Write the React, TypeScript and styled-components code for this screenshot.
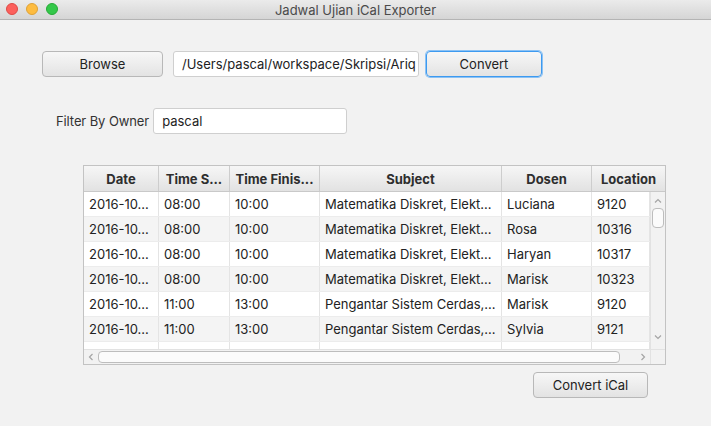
import React from "react";
import styled, { createGlobalStyle } from "styled-components";

const Global = createGlobalStyle`
  html, body { margin: 0; padding: 0; }
  body { font-family: Inter, "Noto Sans", sans-serif; background: #ececec; }
  * { box-sizing: border-box; }
`;

const Window = styled.div`
  width: 711px;
  height: 426px;
  background: #f2f2f2;
  display: flex;
  flex-direction: column;
  overflow: hidden;
`;

const TitleBar = styled.div`
  height: 20px;
  flex: none;
  position: relative;
  display: flex;
  align-items: center;
  justify-content: center;
  background: linear-gradient(#ebebeb, #d5d5d5);
  border-bottom: 1px solid #b4b4b4;
  font-size: 13px;
  color: #4a4a4a;
`;

const Lights = styled.div`
  position: absolute;
  left: 6px;
  top: 3px;
  display: flex;
  gap: 8px;
`;

const Light = styled.span<{ $c: string; $b: string }>`
  width: 12px;
  height: 12px;
  border-radius: 50%;
  background: ${(p) => p.$c};
  border: 0.5px solid ${(p) => p.$b};
`;

const Content = styled.div`
  flex: 1;
  display: flex;
  flex-direction: column;
`;

const TopRow = styled.div`
  display: flex;
  align-items: center;
  margin: 31px 0 0 42px;
`;

const Button = styled.button<{ $w: number; $focus?: boolean }>`
  width: ${(p) => p.$w}px;
  height: 26px;
  font-family: inherit;
  font-size: 13px;
  color: #222;
  background: linear-gradient(#f7f7f7, #e3e3e3);
  border: 1px solid ${(p) => (p.$focus ? "#3d9af0" : "#b8b8b8")};
  box-shadow: ${(p) => (p.$focus ? "0 0 0 1px #8cc2f4" : "none")};
  border-radius: 4px;
  padding: 0;
  margin: 0;
`;

const Field = styled.div<{ $w: number }>`
  width: ${(p) => p.$w}px;
  height: 26px;
  background: #fff;
  border: 1px solid #cfcfcf;
  border-radius: 3px;
  font-size: 13px;
  color: #222;
  display: flex;
  align-items: center;
  padding-left: 8px;
  white-space: nowrap;
  overflow: hidden;
`;

const FilterRow = styled.div`
  display: flex;
  align-items: center;
  margin: 31px 0 0 56px;
`;

const Label = styled.span`
  font-size: 13px;
  color: #333;
  margin-right: 4px;
  letter-spacing: -0.1px;
`;

const Table = styled.div`
  margin: 31px 0 0 83px;
  width: 583px;
  height: 200px;
  border: 1px solid #c3c3c3;
  background: #fff;
  display: flex;
  flex-direction: column;
  overflow: hidden;
`;

const cols = "75px 71px 90px 182px 90px 1fr";

const Header = styled.div`
  height: 26px;
  flex: none;
  display: grid;
  grid-template-columns: ${cols};
  background: linear-gradient(#f6f6f6, #e2e2e2);
  border-bottom: 1px solid #c9c9c9;
`;

const HeadCell = styled.div`
  font-size: 13px;
  font-weight: 700;
  color: #2e2e2e;
  display: flex;
  align-items: center;
  justify-content: center;
  border-right: 1px solid #cdcdcd;
  white-space: nowrap;
  overflow: hidden;
  &:last-child { border-right: none; }
`;

const BodyArea = styled.div`
  flex: 1;
  display: flex;
  overflow: hidden;
`;

const Rows = styled.div`
  flex: 1;
  overflow: hidden;
`;

const Row = styled.div<{ $alt: boolean }>`
  height: 25px;
  display: grid;
  grid-template-columns: ${cols};
  background: ${(p) => (p.$alt ? "#f4f4f4" : "#fff")};
  border-bottom: 1px solid #ececec;
`;

const Cell = styled.div`
  font-size: 13px;
  color: #222;
  display: flex;
  align-items: center;
  padding-left: 5px;
  border-right: 1px solid #e4e4e4;
  white-space: nowrap;
  overflow: hidden;
`;

const VScroll = styled.div`
  width: 15px;
  flex: none;
  background: #f2f2f2;
  border-left: 1px solid #e2e2e2;
  display: flex;
  flex-direction: column;
  align-items: center;
  padding-top: 4px;
  position: relative;
`;

const VThumb = styled.div`
  width: 12px;
  height: 20px;
  margin-top: 2px;
  background: #fbfbfb;
  border: 1px solid #bdbdbd;
  border-radius: 4px;
`;

const DownArrow = styled.div`
  position: absolute;
  bottom: 3px;
  left: 2px;
`;

const HBar = styled.div`
  height: 15px;
  flex: none;
  display: flex;
  align-items: center;
  background: #f2f2f2;
  border-top: 1px solid #e2e2e2;
  padding-left: 2px;
`;

const HThumb = styled.div`
  width: 522px;
  height: 12px;
  margin-left: 2px;
  background: #fbfbfb;
  border: 1px solid #bdbdbd;
  border-radius: 4px;
`;

const HRight = styled.div`
  margin-left: 18px;
  display: flex;
`;

const Corner = styled.div`
  margin-left: auto;
  width: 15px;
  height: 100%;
  border-left: 1px solid #e2e2e2;
`;

const Footer = styled.div`
  display: flex;
  margin: 7px 0 0 533px;
`;

const Chevron = ({ d }: { d: string }) => (
  <svg width="10" height="10" viewBox="0 0 10 10">
    <path d={d} fill="none" stroke="#a5a5a5" strokeWidth="1.2" />
  </svg>
);

const headers = ["Date", "Time S...", "Time Finis...", "Subject", "Dosen", "Location"];

const data = [
  ["2016-10...", "08:00", "10:00", "Matematika Diskret, Elekt...", "Luciana", "9120"],
  ["2016-10...", "08:00", "10:00", "Matematika Diskret, Elekt...", "Rosa", "10316"],
  ["2016-10...", "08:00", "10:00", "Matematika Diskret, Elekt...", "Haryan", "10317"],
  ["2016-10...", "08:00", "10:00", "Matematika Diskret, Elekt...", "Marisk", "10323"],
  ["2016-10...", "11:00", "13:00", "Pengantar Sistem Cerdas,...", "Marisk", "9120"],
  ["2016-10...", "11:00", "13:00", "Pengantar Sistem Cerdas,...", "Sylvia", "9121"],
  ["", "", "", "", "", ""],
];

export default function App() {
  return (
    <>
      <Global />
      <Window>
        <TitleBar>
          <Lights>
            <Light $c="#fc605c" $b="#de4a45" />
            <Light $c="#fdbc40" $b="#dea236" />
            <Light $c="#34c84a" $b="#27aa36" />
          </Lights>
          Jadwal Ujian iCal Exporter
        </TitleBar>
        <Content>
          <TopRow>
            <Button $w={121}>Browse</Button>
            <Field $w={246} style={{ marginLeft: 10 }}>/Users/pascal/workspace/Skripsi/Ariq</Field>
            <Button $w={116} $focus style={{ marginLeft: 7 }}>Convert</Button>
          </TopRow>
          <FilterRow>
            <Label>Filter By Owner</Label>
            <Field $w={194}>pascal</Field>
          </FilterRow>
          <Table>
            <Header>
              {headers.map((h) => (
                <HeadCell key={h}>{h}</HeadCell>
              ))}
            </Header>
            <BodyArea>
              <Rows>
                {data.map((r, i) => (
                  <Row key={i} $alt={i % 2 === 1}>
                    {r.map((c, j) => (
                      <Cell key={j}>{c}</Cell>
                    ))}
                  </Row>
                ))}
              </Rows>
              <VScroll>
                <Chevron d="M2 6.5 L5 3.5 L8 6.5" />
                <VThumb />
                <DownArrow>
                  <Chevron d="M2 3.5 L5 6.5 L8 3.5" />
                </DownArrow>
              </VScroll>
            </BodyArea>
            <HBar>
              <Chevron d="M6.5 2 L3.5 5 L6.5 8" />
              <HThumb />
              <HRight>
                <Chevron d="M3.5 2 L6.5 5 L3.5 8" />
              </HRight>
              <Corner />
            </HBar>
          </Table>
          <Footer>
            <Button $w={115}>Convert iCal</Button>
          </Footer>
        </Content>
      </Window>
    </>
  );
}
